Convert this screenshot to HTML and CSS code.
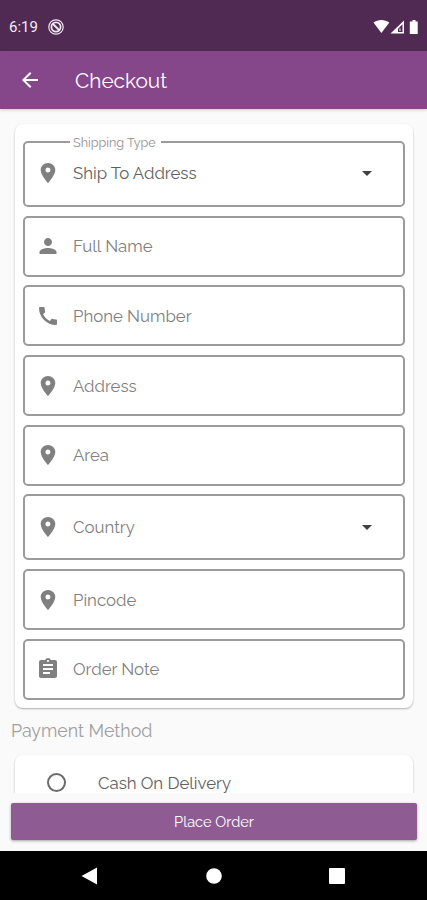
FILE: index.html
```html
<!DOCTYPE html>
<html lang="en">
<head>
    <meta charset="UTF-8">
    <meta name="viewport" content="width=device-width, initial-scale=1.0">
    <title>Checkout</title>
    <link rel="stylesheet" href="styles.css">
</head>
<body>
    <!-- Shared icons -->
    <svg class="sprite" width="0" height="0">
        <symbol id="pin" viewBox="0 0 24 24">
            <path d="M12 2C8.130 2 4.700 5.130 4.700 9c0 5.250 7.300 13 7.300 13s7.300-7.750 7.300-13c0-3.870-3.430-7-7.300-7zm0 9.500a2.500 2.500 0 1 1 0-5 2.500 2.500 0 0 1 0 5z"/>
        </symbol>
        <symbol id="arrow-down" viewBox="0 0 24 24">
            <path d="M7 10l5 5 5-5z"/>
        </symbol>
    </svg>

    <div class="status-bar">
        <span class="time">6:19</span>
        <svg class="dnd" viewBox="0 0 16 16">
            <circle cx="8" cy="8" r="7.200" fill="none" stroke="currentColor" stroke-width="1.200"/>
            <circle cx="8" cy="8" r="4.600" fill="none" stroke="currentColor" stroke-width="1.800"/>
            <path d="M4.500 4.500l7 7" fill="none" stroke="currentColor" stroke-width="2"/>
        </svg>
        <svg class="signals" viewBox="0 0 48 16">
            <path d="M0.500 3.600C5 .2 12 .2 16.300 3.600L8.400 14z" fill="currentColor"/>
            <path d="M31 1.500V14.500H17.500z" fill="currentColor"/>
            <path d="M29.500 5.200V13H25V9.700z" fill="#502a52"/>
            <path d="M26.500 9.500h1v2.500h-1z" fill="currentColor"/>
            <path d="M39.500 1h3v1.500h2.200v12.500h-7.900V2.500h2.700z" fill="currentColor"/>
        </svg>
    </div>

    <div class="header">
        <svg class="back" viewBox="0 0 24 24"><path d="M20 11H7.830l5.590-5.590L12 4l-8 8 8 8 1.410-1.410L7.830 13H20v-2z"/></svg>
        <h1>Checkout</h1>
    </div>

    <div class="content">
        <!-- Shipping form -->
        <div class="card form-card">
            <div class="field select filled">
                <span class="legend">Shipping Type</span>
                <svg class="icon"><use href="#pin"/></svg>
                <span class="label ship">Ship To Address</span>
                <svg class="arrow"><use href="#arrow-down"/></svg>
            </div>
            <div class="field">
                <svg class="icon" viewBox="0 0 24 24"><path d="M12 12c2.210 0 4-1.790 4-4s-1.790-4-4-4-4 1.790-4 4 1.790 4 4 4zm0 2c-2.670 0-8.500 1.340-8.500 4v2h17v-2c0-2.660-5.830-4-8.500-4z"/></svg>
                <span class="label">Full Name</span>
            </div>
            <div class="field">
                <svg class="icon" viewBox="0 0 24 24"><path d="M20.010 15.380c-1.230 0-2.420-.2-3.530-.56a.977.977 0 0 0-1.010.24l-1.570 1.970c-2.830-1.350-5.480-3.900-6.890-6.830l1.950-1.660c.27-.28.35-.67.24-1.020-.37-1.110-.56-2.300-.56-3.530 0-.54-.45-.99-.99-.99H4.190C3.650 3 3 3.240 3 3.990 3 13.280 10.730 21 20.010 21c.71 0 .99-.63.99-1.180v-3.450c0-.54-.45-.99-.99-.99z"/></svg>
                <span class="label">Phone Number</span>
            </div>
            <div class="field">
                <svg class="icon"><use href="#pin"/></svg>
                <span class="label">Address</span>
            </div>
            <div class="field">
                <svg class="icon"><use href="#pin"/></svg>
                <span class="label">Area</span>
            </div>
            <div class="field select">
                <svg class="icon"><use href="#pin"/></svg>
                <span class="label">Country</span>
                <svg class="arrow"><use href="#arrow-down"/></svg>
            </div>
            <div class="field">
                <svg class="icon"><use href="#pin"/></svg>
                <span class="label">Pincode</span>
            </div>
            <div class="field">
                <svg class="icon" viewBox="0 0 24 24"><path d="M19 3h-4.180C14.400 1.840 13.300 1 12 1s-2.400.84-2.820 2H5c-1.100 0-2 .9-2 2v14c0 1.100.9 2 2 2h14c1.100 0 2-.9 2-2V5c0-1.100-.9-2-2-2zm-7 0c.55 0 1 .45 1 1s-.45 1-1 1-1-.45-1-1 .45-1 1-1zm2 14H7v-2h7v2zm3-4H7v-2h10v2zm0-4H7V7h10v2z"/></svg>
                <span class="label">Order Note</span>
            </div>
        </div>

        <!-- Payment -->
        <h2>Payment Method</h2>
        <div class="card payment-card">
            <span class="radio"></span>
            <span class="option">Cash On Delivery</span>
        </div>
    </div>

    <div class="footer">
        <button class="order-btn">Place Order</button>
    </div>

    <div class="nav-bar">
        <svg viewBox="0 0 20 20"><path d="M1.500 10L17 1.500V18.500z"/></svg>
        <svg viewBox="0 0 20 20"><circle cx="10" cy="10" r="7.800"/></svg>
        <svg viewBox="0 0 20 20"><rect x="2" y="2" width="16" height="16" rx="1"/></svg>
    </div>
</body>
</html>
```

FILE: styles.css
```css
* {
    box-sizing: border-box;
}
body {
    font-family: Raleway, Lato, sans-serif;
    margin: 0;
    height: 900px;
    display: flex;
    flex-direction: column;
    overflow: hidden;
    background-color: #fafafa;
}
svg {
    fill: currentColor;
    flex: none;
}
.sprite {
    position: absolute;
}
.status-bar {
    height: 51px;
    flex: none;
    display: flex;
    align-items: center;
    padding: 2px 6px 0 9px;
    background-color: #502a52;
    color: white;
}
.time {
    font-family: Roboto, sans-serif;
    font-size: 15px;
    width: 39px;
    color: #f3edf3;
}
.dnd {
    width: 16px;
    height: 16px;
    color: #eee6ee;
}
.signals {
    width: 48px;
    height: 16px;
    margin-left: auto;
}
.header {
    height: 58px;
    flex: none;
    display: flex;
    align-items: center;
    padding-left: 18px;
    background-color: #85468a;
    color: white;
    box-shadow: 0 1px 3px rgba(0,0,0,0.2);
}
.back {
    width: 24px;
    height: 24px;
}
.header h1 {
    margin: 1px 0 0 33px;
    font-size: 20.8px;
    font-weight: 400;
}
.content {
    height: 684px;
    flex: none;
    padding: 15px 14px 0 15px;
    overflow: hidden;
}
.card {
    background-color: white;
    border-radius: 8px;
    box-shadow: 0 1px 2px rgba(0,0,0,0.3);
}
.form-card {
    height: 584px;
    padding: 17px 8px 0;
    display: flex;
    flex-direction: column;
    gap: 8.7px;
}
.field {
    position: relative;
    height: 61px;
    flex: none;
    display: flex;
    align-items: center;
    padding: 0 24px 0 11px;
    border: 2px solid #9b9b9b;
    border-radius: 5px;
    color: #808080;
}
.select {
    height: 66px;
}
.filled {
    padding-bottom: 2px;
}
.legend {
    position: absolute;
    top: -8px;
    left: 45px;
    padding: 0 5px 0 3px;
    background-color: white;
    color: #909090;
    font-size: 12.6px;
    line-height: 16px;
}
.icon {
    width: 24px;
    height: 24px;
}
.label {
    margin-left: 13px;
    font-size: 16.8px;
}
.ship {
    color: #606060;
}
.arrow {
    width: 24px;
    height: 24px;
    margin-left: auto;
    color: #404040;
}
h2 {
    margin: 10px 0 12px -4px;
    font-size: 17.8px;
    line-height: 25px;
    font-weight: 400;
    color: #a0a0a0;
}
.payment-card {
    height: 70px;
    display: flex;
    align-items: flex-start;
    padding: 18px 0 0 32px;
}
.radio {
    width: 19px;
    height: 19px;
    border: 2px solid #6b6b6b;
    border-radius: 50%;
}
.option {
    margin-left: 32px;
    font-size: 16.8px;
    line-height: 20px;
    color: #606060;
}
.footer {
    height: 58px;
    flex: none;
    padding: 10px 10px 0 11px;
}
.order-btn {
    display: block;
    width: 100%;
    height: 37px;
    padding: 0;
    border: none;
    border-radius: 2px;
    background-color: #8e5b93;
    color: white;
    font-family: inherit;
    font-size: 14.6px;
    box-shadow: 0 1px 3px rgba(0,0,0,0.35);
}
.nav-bar {
    height: 49px;
    flex: none;
    display: flex;
    justify-content: space-between;
    align-items: center;
    padding: 0 80px;
    background-color: black;
    color: white;
}
.nav-bar svg {
    width: 20px;
    height: 20px;
}
```
